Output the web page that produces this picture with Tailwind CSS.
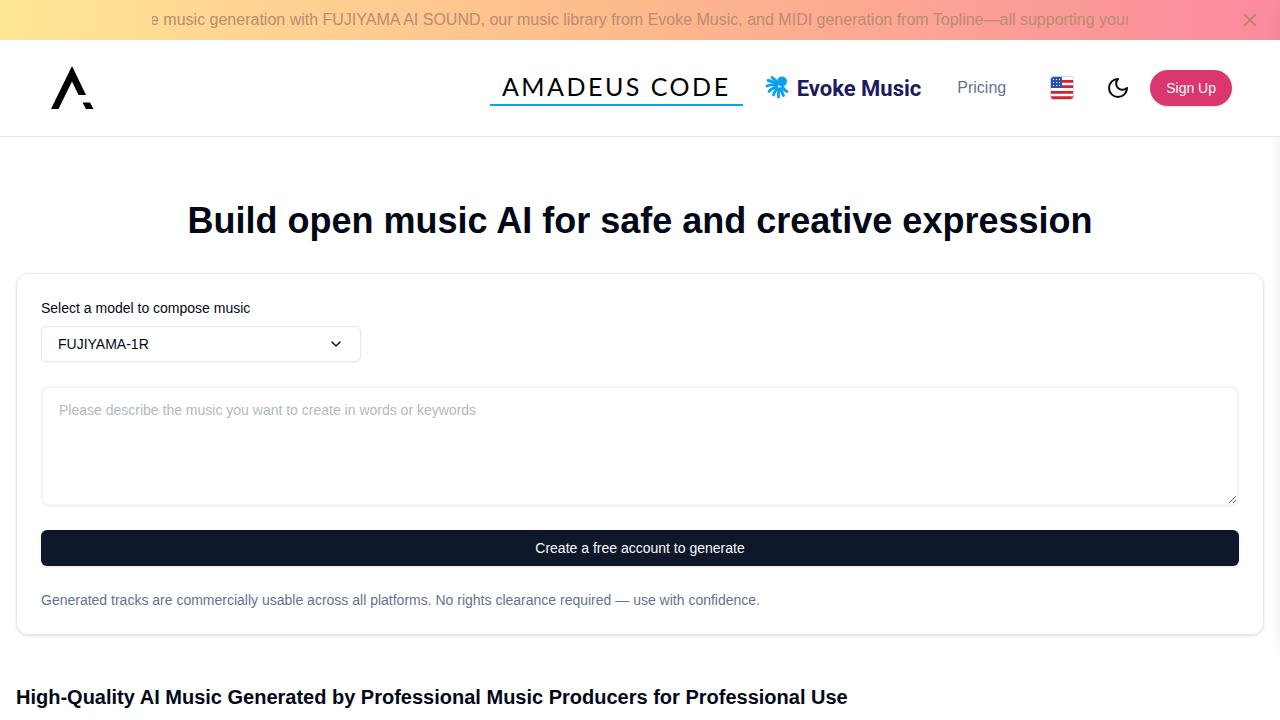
<!DOCTYPE html>
<html lang="en">
<head>
  <meta charset="UTF-8" />
  <meta name="viewport" content="width=device-width, initial-scale=1.0" />
  <title>Amadeus Code</title>
  <script src="https://cdn.jsdelivr.net/npm/@tailwindcss/browser@4"></script>
</head>
<body class="bg-white text-[#020817] font-['Liberation_Sans',Arial,sans-serif]">

  <!-- Announcement bar -->
  <div class="relative flex h-10 items-center justify-center bg-linear-to-r/srgb from-[#ffe696] via-[#fdb98c] to-[#fb8a9f] px-[152px]">
    <div class="w-full overflow-hidden whitespace-nowrap text-[#ba8b71]">
      <p class="-ml-0.5">e music generation with FUJIYAMA AI SOUND, our music library from Evoke Music, and MIDI generation from Topline—all supporting your</p>
    </div>
    <button type="button" aria-label="Close" class="absolute right-5 text-[#b5856b]">
      <svg class="size-5" viewBox="0 0 24 24" fill="none" stroke="currentColor" stroke-width="2" stroke-linecap="round"><path d="M18.500 5.500 5.500 18.500M5.500 5.500l13 13" /></svg>
    </button>
  </div>

  <header class="relative z-10 flex items-center justify-between border-b border-slate-200 bg-white px-12 py-6">
    <a href="#" aria-label="Home">
      <svg class="size-12" viewBox="0 0 48 48"><path d="M24 2 38 31H30.500L24 17.500 10.500 45H3ZM34.500 38.500H42L45.500 45H38Z" /></svg>
    </a>

    <nav class="flex items-center">
      <a href="#" class="flex h-9 w-[253px] items-center justify-center border-b-2 border-[#0ea5e0] font-[Lato,sans-serif] text-[25px] tracking-widest text-black">AMADEUS CODE</a>

      <a href="#" class="ml-5.5 flex h-9 items-center gap-2 font-[Roboto,sans-serif] text-[22px] font-bold text-[#1b1b60]">
        <svg class="size-6" viewBox="0 0 24 24" fill="none" stroke="#0c9fec" stroke-linecap="round">
          <circle cx="17" cy="5.500" r="5" fill="#0c9fec" stroke="none" />
          <g stroke-width="2.800">
            <path d="M12.500 7.500Q10.500 3.500 7 1.500" />
            <path d="M12 9Q8 5 3 4.500" />
            <path d="M12 10.500Q7 7.500 2 10" />
            <path d="M12 12Q7 11.500 4 15.500" />
            <path d="M13 13Q9.500 14.500 8.500 19" />
            <path d="M14.500 13Q13 16 13.500 21" />
            <path d="M16 12.500Q16.500 16 18.500 19.500" />
            <path d="M17.500 11Q19 14 22 15.500" />
          </g>
        </svg>
        Evoke Music
      </a>

      <a href="#" class="ml-9 text-slate-500">Pricing</a>

      <button type="button" aria-label="Language" class="ml-9 flex size-10 items-center justify-center">
        <svg class="size-6" viewBox="0 0 24 24">
          <clipPath id="flag"><rect x="0.500" y="0.500" width="23" height="23" rx="3" /></clipPath>
          <g clip-path="url(#flag)">
            <path fill="#fff" d="M0 0h24v24H0z" />
            <path fill="#dc1f2b" d="M0 4h24v2.700H0zM0 9.200h24v2.700H0zM0 15h24v2.700H0zM0 20.300h24v2.700H0z" />
            <path fill="#2b51b5" d="M0 0h12v12H0z" />
            <path stroke="#fff" stroke-width="1" stroke-dasharray="1 2" d="M3 3.500h8M3 6.500h8M3 9.500h8" />
          </g>
          <rect x="0.500" y="0.500" width="23" height="23" rx="3" fill="none" stroke="#cbd5e1" />
        </svg>
      </button>

      <button type="button" aria-label="Dark mode" class="ml-4 flex size-10 items-center justify-center">
        <svg class="size-6" viewBox="0 0 24 24" fill="none" stroke="currentColor" stroke-width="2" stroke-linecap="round" stroke-linejoin="round"><path d="M12 3a6 6 0 0 0 9 9 9 9 0 1 1-9-9Z" /></svg>
      </button>

      <button type="button" class="ml-3 h-9 rounded-full bg-[#db366d] px-4 text-sm text-slate-50 shadow-sm">Sign Up</button>
    </nav>
  </header>

  <!-- Slide-out panel, closed -->
  <aside class="fixed top-0 left-full h-[640px] w-64 bg-white shadow-lg"></aside>

  <main class="px-4 pt-16">
    <h1 class="text-center text-4xl font-bold">Build open music AI for safe and creative expression</h1>

    <form class="mt-8 rounded-xl border border-slate-200 p-6 shadow-sm">
      <label for="model" class="block text-sm">Select a model to compose music</label>
      <div class="relative mt-2 max-w-80">
        <select id="model" class="h-9 w-full appearance-none rounded-md border border-slate-200 bg-white px-4 text-sm shadow-xs">
          <option>FUJIYAMA-1R</option>
        </select>
        <svg class="pointer-events-none absolute top-2.5 right-[17px] size-4" viewBox="0 0 24 24" fill="none" stroke="currentColor" stroke-width="2" stroke-linecap="round" stroke-linejoin="round"><path d="m6 9 6 6 6-6" /></svg>
      </div>

      <textarea aria-label="Music description" placeholder="Please describe the music you want to create in words or keywords" class="mt-6 block h-[120px] w-full rounded-lg border-2 border-slate-100 px-4 py-3 text-sm shadow-xs placeholder:text-[#b1b9c5]"></textarea>

      <button type="button" class="mt-6 h-9 w-full rounded-md bg-slate-900 text-sm text-slate-50 shadow-sm">Create a free account to generate</button>

      <p class="mt-6 text-sm text-slate-500">Generated tracks are commercially usable across all platforms. No rights clearance required — use with confidence.</p>
    </form>

    <h2 class="mt-12 text-xl font-bold">High-Quality AI Music Generated by Professional Music Producers for Professional Use</h2>
  </main>
</body>
</html>
